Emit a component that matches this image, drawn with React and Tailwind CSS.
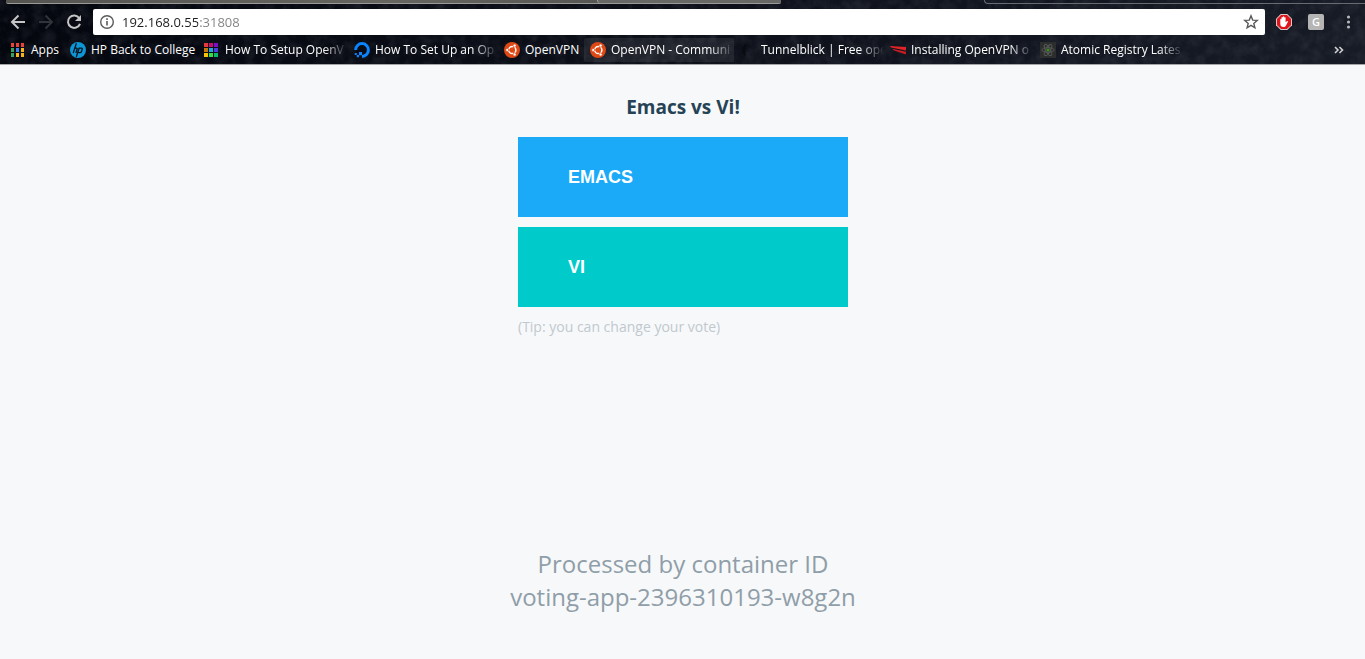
import React, { useState } from "react";

function AppsIcon() {
  const colors = ["#e8433b", "#e8433b", "#e8433b", "#34a35c", "#3b82f0", "#f5b51e", "#34a35c", "#f5b51e", "#f5b51e"];
  return (
    <svg viewBox="0 0 16 16" className="size-4 shrink-0" aria-hidden="true">
      {colors.map((c, i) => (
        <rect key={i} x={1 + (i % 3) * 5} y={1 + Math.floor(i / 3) * 5} width="3" height="4" fill={c} />
      ))}
    </svg>
  );
}

function HpIcon() {
  return (
    <svg viewBox="0 0 16 16" className="size-4 shrink-0" aria-hidden="true">
      <circle cx="8" cy="8" r="8" fill="#0c96d6" />
      <path d="M6.4 1.2 3.2 11M4.8 6.2h1.6q1 0 .7 1L5.9 11M9.3 5.6 6.3 15M9.2 6.1h2.2q1.2 0 .8 1.2l-.8 2.4q-.3 1-1.3 1H8" fill="none" stroke="#08131f" strokeWidth="1.3" />
    </svg>
  );
}

function GridIcon() {
  const colors = ["#e5393c", "#cc0a76", "#7a10c4", "#c87508", "#26a5dc", "#4a3fe0", "#ffc107", "#35e03a", "#0ab873"];
  return (
    <svg viewBox="0 0 16 16" className="size-4 shrink-0" aria-hidden="true">
      {colors.map((c, i) => (
        <rect key={i} x={(i % 3) * 5} y={1 + Math.floor(i / 3) * 5} width="4" height="4" fill={c} />
      ))}
    </svg>
  );
}

function OceanIcon() {
  return (
    <svg viewBox="0 0 16 16" className="size-4 shrink-0" aria-hidden="true">
      <path d="M1.6 8A6.4 6.4 0 1 1 8 14.4" fill="none" stroke="#0a84ff" strokeWidth="3" />
      <path d="M5 10h3v3.2H5zM2.8 13h2.2v2.2H2.8zM.8 11h2v2h-2z" fill="#0a84ff" />
    </svg>
  );
}

function UbuntuIcon() {
  return (
    <svg viewBox="0 0 16 16" className="size-4 shrink-0" aria-hidden="true">
      <circle cx="8" cy="8" r="8" fill="#dd4814" />
      <circle cx="8.3" cy="8" r="3.6" fill="none" stroke="#fff" strokeWidth="1.5" />
      <path d="M8.3 8 4 8M8.3 8l2.4-4.3M8.3 8l2.4 4.3" stroke="#dd4814" strokeWidth="1" />
      <g fill="#fff" stroke="#dd4814" strokeWidth=".6">
        <circle cx="3.2" cy="8" r="1.5" />
        <circle cx="10.6" cy="3.6" r="1.5" />
        <circle cx="10.6" cy="12.4" r="1.5" />
      </g>
    </svg>
  );
}

function TunnelIcon() {
  return (
    <svg viewBox="0 0 16 16" className="size-4 shrink-0" aria-hidden="true">
      <path d="M7 2Q2 3 2 8t4 6q-2-6 1-12z" fill="#090b12" />
    </svg>
  );
}

function InstallIcon() {
  return (
    <svg viewBox="0 0 16 16" className="size-4 shrink-0" aria-hidden="true">
      <path d="M0 4l16 1v3.600L1 5.600z" fill="#e02427" />
      <path d="M2 6.800l14 3v2.600L4 8.600z" fill="#c91d21" />
    </svg>
  );
}

function AtomicIcon() {
  return (
    <svg viewBox="0 0 16 16" className="size-4 shrink-0" aria-hidden="true">
      <rect width="16" height="16" fill="#2c2d2d" />
      <g fill="none" stroke="#575a59" strokeWidth=".9">
        <ellipse cx="8" cy="8" rx="6.2" ry="2.3" />
        <ellipse cx="8" cy="8" rx="6.2" ry="2.3" transform="rotate(60 8 8)" />
        <ellipse cx="8" cy="8" rx="6.2" ry="2.3" transform="rotate(120 8 8)" />
      </g>
      <circle cx="8" cy="8" r="1.6" fill="#3d8b1c" />
    </svg>
  );
}

const bookmarks = [
  { label: "Apps", Icon: AppsIcon, size: "w-[60px]" },
  { label: "HP Back to College", Icon: HpIcon, size: "w-[134px]" },
  { label: "How To Setup OpenV", Icon: GridIcon, size: "w-[150px]", fade: true },
  { label: "How To Set Up an Op", Icon: OceanIcon, size: "w-[150px]", fade: true },
  { label: "OpenVPN", Icon: UbuntuIcon, size: "w-[86px]" },
  { label: "OpenVPN - Communi", Icon: UbuntuIcon, size: "w-[150px]", fade: true, active: true },
  { label: "Tunnelblick | Free ope", Icon: TunnelIcon, size: "w-[150px]", fade: true },
  { label: "Installing OpenVPN o", Icon: InstallIcon, size: "w-[150px]", fade: true },
  { label: "Atomic Registry Lates", Icon: AtomicIcon, size: "w-[150px]", fade: true },
];

function Bookmark({ label, Icon, size, fade, active }) {
  return (
    <a
      href="#"
      className={`flex h-6 shrink-0 items-center gap-[5px] rounded-xs pl-1.5 ${size} ${active ? "bg-white/8" : ""}`}
    >
      <Icon />
      <span className={`min-w-0 flex-1 whitespace-nowrap ${fade ? "mask-r-from-80% mask-r-to-100%" : ""}`}>
        {label}
      </span>
    </a>
  );
}

function Texture() {
  return (
    <svg className="pointer-events-none absolute inset-0 size-full" aria-hidden="true">
      <filter id="grain" x="0" y="0" width="100%" height="100%">
        <feTurbulence type="fractalNoise" baseFrequency="0.09" numOctaves="5" seed="4" />
        <feColorMatrix values="0 0 0 0 .22  0 0 0 0 .25  0 0 0 0 .31  .9 0 0 0 -.33" />
      </filter>
      <rect width="100%" height="100%" filter="url(#grain)" opacity=".3" />
    </svg>
  );
}

function Browser() {
  const [address, setAddress] = useState("192.168.0.55:31808");
  return (
    <header className="relative border-b border-[#a5a6aa] bg-linear-to-r from-[#05070f] via-[#0d1019] to-[#171b26] font-['Open_Sans',sans-serif] text-white">
      <Texture />
      <div className="relative flex h-1 justify-between pl-1.5" aria-hidden="true">
        <div className="flex w-[57%] rounded-b-xs border-b border-[#9a9a98] bg-linear-to-r from-[#555451] via-[#66655f] to-[#4a4a4a]">
          <div className="ml-auto w-[184px] rounded-bl-sm border-l border-[#a5a5a3] bg-[#686866]" />
        </div>
        <div className="w-[28%] rounded-bl-sm border-b border-l border-[#686b72]" />
      </div>
      <div className="relative flex h-9 items-center pr-[9px] pl-2.5">
        <button type="button" aria-label="Back" className="flex w-7 shrink-0">
          <svg viewBox="0 0 16 16" className="size-4" fill="none" stroke="#c5c5c6" strokeWidth="2">
            <path d="M15 8H2.5M8.500 1.500 2 8l6.500 6.500" />
          </svg>
        </button>
        <button type="button" aria-label="Forward" className="flex w-7 shrink-0">
          <svg viewBox="0 0 16 16" className="size-4" fill="none" stroke="#30333a" strokeWidth="2">
            <path d="M1 8h12.500M7.500 1.500 14 8l-6.500 6.500" />
          </svg>
        </button>
        <button type="button" aria-label="Reload" className="flex w-[27px] shrink-0">
          <svg viewBox="0 0 16 16" className="size-4" fill="none" stroke="#c5c5c6" strokeWidth="2">
            <path d="M13.300 4.200A6.200 6.200 0 1 0 14 9.800" />
            <path d="M15 1v6H9z" fill="#c5c5c6" stroke="none" />
          </svg>
        </button>
        <div className="flex h-[26px] flex-1 items-center rounded-xs bg-white px-1.5">
          <svg viewBox="0 0 16 16" className="size-4 shrink-0" fill="none" stroke="#5a5a5a" aria-hidden="true">
            <circle cx="8" cy="8" r="6.300" strokeWidth="1.400" />
            <path d="M8 7v4.500M8 4.300v1.700" strokeWidth="1.600" />
          </svg>
          <input
            type="text"
            aria-label="Address"
            value={address}
            onChange={(e) => setAddress(e.target.value)}
            className="ml-[7px] min-w-0 flex-1 bg-linear-to-r from-[#1c1c1c] from-[76px] to-[#808080] to-[76px] bg-clip-text text-[13px] leading-5 text-transparent caret-black outline-none"
          />
          <button type="button" aria-label="Bookmark this page" className="flex shrink-0">
            <svg viewBox="0 0 16 16" className="size-4" fill="none" stroke="#5a5a5a" strokeWidth="1.400">
              <path d="m8 1.800 1.700 4.300 4.600.3-3.500 3 1.100 4.400L8 11.400l-3.900 2.400 1.100-4.400-3.500-3 4.600-.3z" />
            </svg>
          </button>
        </div>
        <button type="button" aria-label="Ad blocker" className="ml-[11px] flex shrink-0">
          <svg viewBox="0 0 16 16" className="size-4">
            <path d="M4.700 0h6.600L16 4.700v6.600L11.300 16H4.700L0 11.300V4.700z" fill="#d9c9c9" />
            <path d="M5.100 1h5.800L15 5.100v5.800L10.900 15H5.100L1 10.900V5.100z" fill="#e0141b" />
            <path d="M4.300 5.200q.7-.7 1.200 0V3.500q.7-.8 1.300 0v-.8q.8-.8 1.400 0v.8q.8-.7 1.400 0v4.800l1.200-1.100q1-.4 1.300.4L10 11.400q-.6 1.600-2.400 1.600-3.300 0-3.300-3.300z" fill="#fff" />
          </svg>
        </button>
        <button type="button" aria-label="Extension G" className="ml-4 flex size-4 shrink-0 items-center justify-center rounded-xs bg-[#b5b5b5] text-[11px] leading-4 font-semibold text-white">
          G
        </button>
        <button type="button" aria-label="Menu" className="ml-4 flex shrink-0">
          <svg viewBox="0 0 16 16" className="size-4" fill="#b5b6b8">
            <circle cx="8.500" cy="3" r="1.600" />
            <circle cx="8.500" cy="8" r="1.600" />
            <circle cx="8.500" cy="13" r="1.600" />
          </svg>
        </button>
      </div>
      <nav aria-label="Bookmarks" className="relative flex h-6 items-start pl-1 text-xs">
        <div className="flex h-5 min-w-0 flex-1 items-center">
          {bookmarks.map((b) => (
            <Bookmark key={b.label} {...b} />
          ))}
        </div>
        <button type="button" aria-label="More bookmarks" className="mr-[21px] flex h-5 items-center">
          <svg viewBox="0 0 10 10" className="size-2.5" fill="none" stroke="#d0d0d2" strokeWidth="1.600">
            <path d="m1 2 3 3-3 3M5.500 2l3 3-3 3" />
          </svg>
        </button>
      </nav>
    </header>
  );
}

function Choice({ label, className }) {
  return (
    <button
      type="button"
      className={`h-20 cursor-pointer pl-[50px] text-left font-['Liberation_Sans',Arial,sans-serif] text-lg font-bold text-white uppercase ${className}`}
    >
      {label}
    </button>
  );
}

export default function App() {
  return (
    <div className="flex min-h-screen flex-col bg-[#f7f8fa]">
      <Browser />
      <main className="flex flex-1 flex-col items-center justify-between gap-10 pt-7 pb-[46px] pl-px font-['Open_Sans',sans-serif]">
        <section className="flex w-[330px] flex-col gap-2.5">
          <h3 className="mb-1.5 text-center text-[19px] leading-7 font-bold text-[#254355]">Emacs vs Vi!</h3>
          <Choice label="Emacs" className="bg-[#1aaaf8]" />
          <Choice label="Vi" className="bg-[#00cbca]" />
          <p className="text-sm leading-5 text-[#c0c9ce]">(Tip: you can change your vote)</p>
        </section>
        <footer className="text-center text-2xl leading-[33px] text-[#8f9ea8]">
          Processed by container ID
          <br />
          voting-app-2396310193-w8g2n
        </footer>
      </main>
    </div>
  );
}
